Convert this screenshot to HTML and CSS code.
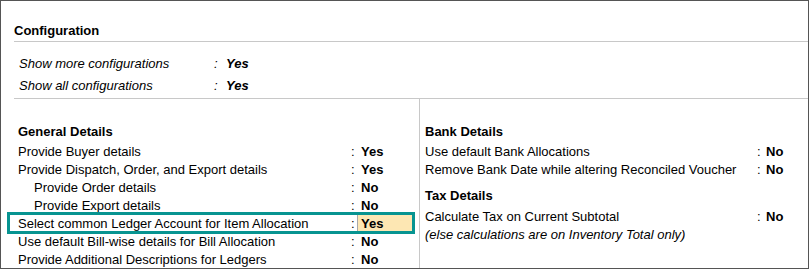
FILE: index.html
```html
<!DOCTYPE html>
<html>
<head>
<meta charset="utf-8">
<link rel="stylesheet" href="styles.css">
</head>
<body>
<div class="panel">
  <div class="title">Configuration</div>
  <div class="config">
    <div class="crow"><span class="clabel">Show more configurations</span><span class="ccolon">:</span><span class="cval">Yes</span></div>
    <div class="crow"><span class="clabel">Show all configurations</span><span class="ccolon">:</span><span class="cval">Yes</span></div>
  </div>
  <div class="cols">
    <div class="col left">
      <div class="head">General Details</div>
      <div class="row"><span class="label">Provide Buyer details</span><span class="colon">:</span><span class="val">Yes</span></div>
      <div class="row"><span class="label">Provide Dispatch, Order, and Export details</span><span class="colon">:</span><span class="val">Yes</span></div>
      <div class="row"><span class="label sub">Provide Order details</span><span class="colon">:</span><span class="val">No</span></div>
      <div class="row"><span class="label sub">Provide Export details</span><span class="colon">:</span><span class="val">No</span></div>
      <div class="row selected"><span class="label">Select common Ledger Account for Item Allocation</span><span class="colon">:</span><span class="val">Yes</span></div>
      <div class="row"><span class="label">Use default Bill-wise details for Bill Allocation</span><span class="colon">:</span><span class="val">No</span></div>
      <div class="row"><span class="label">Provide Additional Descriptions for Ledgers</span><span class="colon">:</span><span class="val">No</span></div>
    </div>
    <div class="col right">
      <div class="head">Bank Details</div>
      <div class="rrow"><span class="label">Use default Bank Allocations</span><span class="colon">:</span><span class="val">No</span></div>
      <div class="rrow"><span class="label">Remove Bank Date while altering Reconciled Voucher</span><span class="colon">:</span><span class="val">No</span></div>
      <div class="head tax">Tax Details</div>
      <div class="rrow"><span class="label">Calculate Tax on Current Subtotal</span><span class="colon">:</span><span class="val">No</span></div>
      <div class="note">(else calculations are on Inventory Total only)</div>
    </div>
  </div>
</div>
</body>
</html>
```

FILE: styles.css
```css
html, body {
  margin: 0;
  padding: 0;
  background: #ffffff;
}
body {
  font-family: "Liberation Sans", Arial, sans-serif;
  font-size: 13px;
  color: #000000;
}
.panel {
  width: 809px;
  height: 269px;
  box-sizing: border-box;
  border: 1px solid #555555;
  padding-top: 21px;
  overflow: hidden;
  display: flex;
  flex-direction: column;
}
.title {
  margin-left: 13px;
  font-weight: bold;
  line-height: 17px;
  height: 17px;
  padding-bottom: 2px;
  border-bottom: 1px solid #c8c8c8;
}
.config {
  margin-left: 13px;
  padding: 11px 0 1px 0;
  border-bottom: 1px solid #c8c8c8;
}
.crow {
  display: grid;
  grid-template-columns: 195px 12px 1fr;
  padding-left: 5px;
  line-height: 22px;
  height: 22px;
  font-style: italic;
}
.cval {
  font-weight: bold;
}
.cols {
  flex: 1;
  display: flex;
  min-height: 0;
}
.col {
  padding-top: 23px;
}
.left {
  width: 419px;
  box-sizing: border-box;
  padding-left: 8px;
  border-right: 1px solid #c8c8c8;
}
.right {
  flex: 1;
  padding-left: 5px;
}
.head {
  font-weight: bold;
  line-height: 20px;
  height: 20px;
}
.left .head {
  padding-left: 9px;
}
.row {
  display: grid;
  grid-template-columns: 332px 7px 1fr;
  width: 404px;
  box-sizing: border-box;
  padding-left: 9px;
  padding-top: 2px;
  line-height: 16px;
  height: 18px;
}
.label {
  white-space: nowrap;
}
.label.sub {
  padding-left: 16px;
}
.colon {
  padding-left: 1px;
}
.val {
  font-weight: bold;
  padding-left: 4px;
}
.row.selected {
  outline: 3px solid #079491;
  outline-offset: -1px;
  padding-top: 0;
  align-items: stretch;
}
.row.selected .label,
.row.selected .colon {
  padding-top: 2px;
}
.row.selected .val {
  background: #fde7b3;
  border-left: 1px solid #a8a8a8;
  padding-left: 3px;
  padding-top: 2px;
}
.rrow {
  display: grid;
  grid-template-columns: 331px 10px 1fr;
  box-sizing: border-box;
  padding-top: 2px;
  line-height: 16px;
  height: 18px;
}
.rrow .val {
  padding-left: 0;
}
.head.tax {
  margin-top: 8px;
  margin-bottom: 1px;
}
.note {
  font-style: italic;
  box-sizing: border-box;
  padding-top: 2px;
  line-height: 16px;
  height: 18px;
}
```
